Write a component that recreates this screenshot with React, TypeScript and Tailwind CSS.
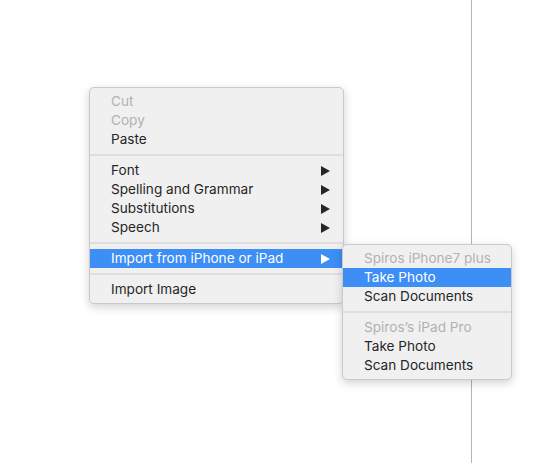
import React from "react"

type Item =
  | { kind: "item"; label: string; disabled?: boolean; active?: boolean; submenu?: boolean }
  | { kind: "sep" }

const mainItems: Item[] = [
  { kind: "item", label: "Cut", disabled: true },
  { kind: "item", label: "Copy", disabled: true },
  { kind: "item", label: "Paste" },
  { kind: "sep" },
  { kind: "item", label: "Font", submenu: true },
  { kind: "item", label: "Spelling and Grammar", submenu: true },
  { kind: "item", label: "Substitutions", submenu: true },
  { kind: "item", label: "Speech", submenu: true },
  { kind: "sep" },
  { kind: "item", label: "Import from iPhone or iPad", submenu: true, active: true },
  { kind: "sep" },
  { kind: "item", label: "Import Image" },
]

const deviceItems: Item[] = [
  { kind: "item", label: "Spiros iPhone7 plus", disabled: true },
  { kind: "item", label: "Take Photo", active: true },
  { kind: "item", label: "Scan Documents" },
  { kind: "sep" },
  { kind: "item", label: "Spiros’s iPad Pro", disabled: true },
  { kind: "item", label: "Take Photo" },
  { kind: "item", label: "Scan Documents" },
]

const Arrow = ({ white }: { white?: boolean }) => (
  <svg width="9" height="10" viewBox="0 0 9 10" className="shrink-0">
    <path d="M0 0 L9 5 L0 10 Z" fill={white ? "#ffffff" : "#262626"} />
  </svg>
)

const Menu = ({ items, className }: { items: Item[]; className: string }) => (
  <div
    className={`absolute flex flex-col py-[4px] bg-[#f0f0f0] border border-[#c9c9c9] rounded-[5px] shadow-[0_3px_10px_rgba(0,0,0,0.18)] ${className}`}
  >
    {items.map((it, idx) =>
      it.kind === "sep" ? (
        <div key={idx} className="h-[12px] flex items-center">
          <div className="h-[2px] w-full bg-[#dedede]" />
        </div>
      ) : (
        <div
          key={idx}
          className={`h-[19px] flex items-center justify-between pl-[21px] pr-[13px] text-[13.6px] ${
            it.active ? "bg-[#3d8ef5] text-white" : it.disabled ? "text-[#b2b2b2]" : "text-[#262626]"
          }`}
        >
          <span>{it.label}</span>
          {it.submenu && <Arrow white={it.active} />}
        </div>
      )
    )}
  </div>
)

export default function App() {
  return (
    <div className="relative w-[533px] h-[463px] bg-white flex font-['Inter','Liberation_Sans',sans-serif] overflow-hidden">
      <div className="w-[472px] h-full border-r border-[#b5b5b5]" />

      <Menu items={mainItems} className="left-[89px] top-[87px] w-[255px]" />
      <Menu items={deviceItems} className="left-[342px] top-[244px] w-[170px]" />
    </div>
  )
}
